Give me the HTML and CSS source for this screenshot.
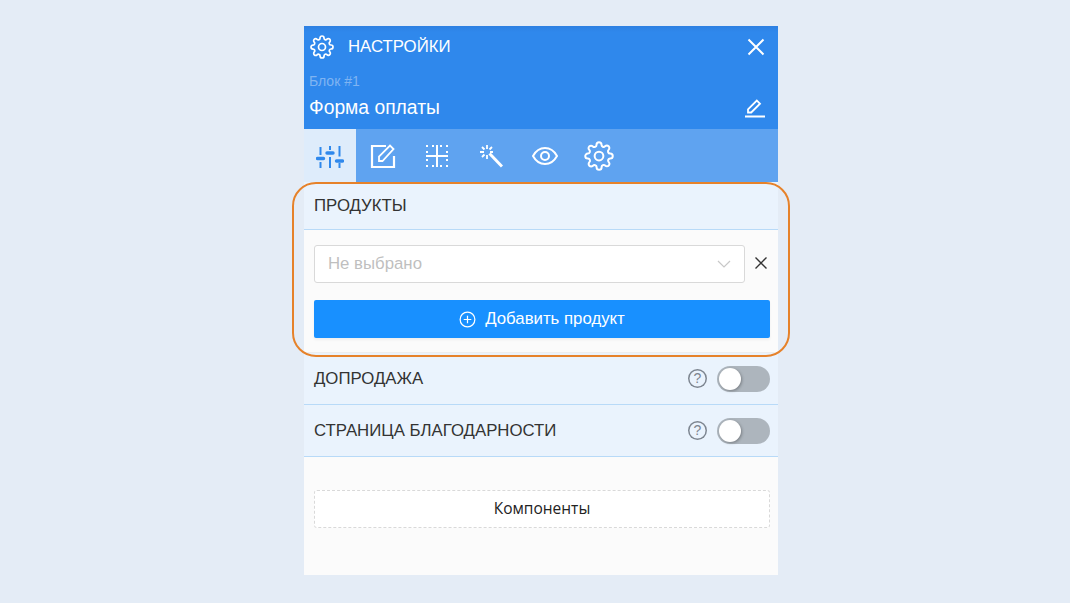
FILE: index.html
```html
<!DOCTYPE html>
<html lang="ru">

<head>
    <meta charset="UTF-8">
    <title>Настройки</title>
    <link rel="stylesheet" href="styles.css">
</head>

<body>
    <div class="panel">
        <header class="panel-head">
            <div class="head-top">
                <svg class="head-gear" viewBox="0 0 24 24"><circle cx="12" cy="12" r="3.500"/><path d="M19.400 15a1.650 1.650 0 0 0 .33 1.820l.06.06a2 2 0 0 1 0 2.830 2 2 0 0 1-2.830 0l-.06-.06a1.650 1.650 0 0 0-1.820-.33 1.650 1.650 0 0 0-1 1.510V21a2 2 0 0 1-2 2 2 2 0 0 1-2-2v-.09A1.650 1.650 0 0 0 9 19.400a1.650 1.650 0 0 0-1.820.33l-.06.06a2 2 0 0 1-2.830 0 2 2 0 0 1 0-2.830l.06-.06a1.650 1.650 0 0 0 .33-1.820 1.650 1.650 0 0 0-1.510-1H3a2 2 0 0 1-2-2 2 2 0 0 1 2-2h.09A1.650 1.650 0 0 0 4.600 9a1.650 1.650 0 0 0-.33-1.820l-.06-.06a2 2 0 0 1 0-2.830 2 2 0 0 1 2.830 0l.06.06a1.650 1.650 0 0 0 1.820.33H9a1.650 1.650 0 0 0 1-1.510V3a2 2 0 0 1 2-2 2 2 0 0 1 2 2v.09a1.650 1.650 0 0 0 1 1.510 1.650 1.650 0 0 0 1.820-.33l.06-.06a2 2 0 0 1 2.830 0 2 2 0 0 1 0 2.830l-.06.06a1.650 1.650 0 0 0-.33 1.820V9a1.650 1.650 0 0 0 1.510 1H21a2 2 0 0 1 2 2 2 2 0 0 1-2 2h-.09a1.650 1.650 0 0 0-1.510 1z"/></svg>
                <span class="head-title">НАСТРОЙКИ</span>
                <svg class="head-close" viewBox="0 0 18 18"><path d="M1.500 1.500l15 15M16.500 1.500l-15 15"/></svg>
            </div>
            <div class="head-block">Блок #1</div>
            <div class="head-name">
                <span>Форма оплаты</span>
                <svg class="head-edit" viewBox="0 0 20 20"><path d="M3 14.500v-3.200L11.800 2.500l3.200 3.200-8.800 8.800zM0 18.500h20"/></svg>
            </div>
        </header>

        <nav class="tabs">
            <a class="tab tab-active">
                <svg viewBox="0 0 28 24"><path d="M4.500 3v8M4.500 18v6M14 2v4M14 13v11M23.500 2v10.500M23.500 19v5" stroke-width="2"/><path d="M1.500 14.500h6M11 9h6M20.500 17h6" stroke-width="3.400" stroke-linecap="round"/></svg>
            </a>
            <a class="tab">
                <svg viewBox="0 0 26 26"><path d="M16 3H2v21h22V13" stroke-width="2.200"/><path d="M9 18v-4.500L20 2.500 23.500 6 12.500 18z" stroke-width="1.800"/></svg>
            </a>
            <a class="tab">
                <svg viewBox="0 0 22 22"><path d="M0 11h22M11 0v22" stroke-width="2"/><path d="M0 1h2M6 1h2M14 1h2M20 1h2M0 7h2M20 7h2M0 15h2M20 15h2M0 21h2M6 21h2M14 21h2M20 21h2" stroke-width="2"/></svg>
            </a>
            <a class="tab">
                <svg viewBox="0 0 24 24"><path d="M10.500 9.500L23 22.500" stroke-width="3"/><path d="M8 1v4M8 11v4M1 8h4M11 8h3M3 3l2.500 2.500M13 3l-2.500 2.500M3 13l2.500-2.500" stroke-width="1.800"/></svg>
            </a>
            <a class="tab">
                <svg viewBox="0 0 26 20"><path d="M1 10C4 4.500 8.500 2 13 2s9 2.500 12 8c-3 5.500-7.500 8-12 8S4 15.500 1 10z" stroke-width="2"/><circle cx="13" cy="10" r="4" stroke-width="2"/></svg>
            </a>
            <a class="tab">
                <svg viewBox="0 0 24 24" stroke-width="1.600"><circle cx="12" cy="12" r="3.500"/><path d="M19.400 15a1.650 1.650 0 0 0 .33 1.820l.06.06a2 2 0 0 1 0 2.830 2 2 0 0 1-2.830 0l-.06-.06a1.650 1.650 0 0 0-1.820-.33 1.650 1.650 0 0 0-1 1.510V21a2 2 0 0 1-2 2 2 2 0 0 1-2-2v-.09A1.650 1.650 0 0 0 9 19.400a1.650 1.650 0 0 0-1.820.33l-.06.06a2 2 0 0 1-2.830 0 2 2 0 0 1 0-2.830l.06-.06a1.650 1.650 0 0 0 .33-1.820 1.650 1.650 0 0 0-1.510-1H3a2 2 0 0 1-2-2 2 2 0 0 1 2-2h.09A1.650 1.650 0 0 0 4.600 9a1.650 1.650 0 0 0-.33-1.820l-.06-.06a2 2 0 0 1 0-2.830 2 2 0 0 1 2.830 0l.06.06a1.650 1.650 0 0 0 1.820.33H9a1.650 1.650 0 0 0 1-1.510V3a2 2 0 0 1 2-2 2 2 0 0 1 2 2v.09a1.650 1.650 0 0 0 1 1.510 1.650 1.650 0 0 0 1.820-.33l.06-.06a2 2 0 0 1 2.830 0 2 2 0 0 1 0 2.830l-.06.06a1.650 1.650 0 0 0-.33 1.820V9a1.650 1.650 0 0 0 1.510 1H21a2 2 0 0 1 2 2 2 2 0 0 1-2 2h-.09a1.650 1.650 0 0 0-1.510 1z"/></svg>
            </a>
        </nav>

        <section class="products">
            <div class="row-head row-products">ПРОДУКТЫ</div>
            <div class="products-body">
                <div class="select-line">
                    <div class="select-box">
                        <span>Не выбрано</span>
                        <svg class="select-arrow" viewBox="0 0 14 8"><path d="M1 1l6 6 6-6"/></svg>
                    </div>
                    <svg class="select-clear" viewBox="0 0 12 12"><path d="M.5.5l11 11M11.500.5l-11 11"/></svg>
                </div>
                <button class="add-btn">
                    <svg viewBox="0 0 18 18"><circle cx="9" cy="9" r="7.800"/><path d="M9 5v8M5 9h8"/></svg>
                    Добавить продукт
                </button>
            </div>
            <div class="highlight"></div>
        </section>

        <div class="row-head">
            <span>ДОПРОДАЖА</span>
            <div class="row-tools">
                <span class="help">?</span>
                <span class="toggle"><i></i></span>
            </div>
        </div>
        <div class="row-head">
            <span>СТРАНИЦА БЛАГОДАРНОСТИ</span>
            <div class="row-tools">
                <span class="help">?</span>
                <span class="toggle"><i></i></span>
            </div>
        </div>

        <div class="components">
            <div class="components-box">Компоненты</div>
        </div>
    </div>
</body>

</html>
```

FILE: styles.css
```css
html, body {
    margin: 0;
    padding: 0;
    height: 100%;
    overflow: hidden;
}

body {
    background: #e4ecf6;
    font-family: 'Liberation Sans', Arial, sans-serif;
    color: #333;
}

svg {
    fill: none;
    stroke: #fff;
    display: block;
}

.panel {
    width: 474px;
    height: 549px;
    margin: 26px 0 0 304px;
    background: #fbfbfb;
    display: flex;
    flex-direction: column;
}

.panel-head {
    height: 103px;
    box-sizing: border-box;
    background: linear-gradient(#2e80e2, #2f88ec 6px);
    color: #fff;
    padding: 7px 12px 0 5px;
}

.head-top {
    display: flex;
    align-items: center;
    height: 27px;
}

.head-gear {
    width: 24px;
    height: 24px;
    stroke-width: 1.700;
    margin-left: 1px;
}

.head-title {
    font-size: 16.800px;
    margin-left: 14px;
}

.head-close {
    width: 18px;
    height: 18px;
    stroke-width: 2;
    margin-left: auto;
    margin-right: 1px;
}

.head-block {
    font-size: 14px;
    line-height: 16px;
    margin-top: 13px;
    color: #7fb4f2;
}

.head-name {
    display: flex;
    justify-content: space-between;
    align-items: center;
    font-size: 19.300px;
    line-height: 22px;
    margin-top: 8px;
}

.head-edit {
    width: 20px;
    height: 20px;
    stroke-width: 1.800;
    margin-right: 1px;
}

.tabs {
    display: flex;
    height: 53px;
    background: #5fa3f0;
    flex: none;
}

.tab {
    width: 52px;
    display: flex;
    align-items: center;
    justify-content: center;
    flex: none;
}

.tab:nth-child(n+2) {
    width: 54px;
}

.tab:nth-child(2) svg { width: 26px; height: 26px; }
.tab:nth-child(3) svg { width: 22px; height: 22px; }
.tab:nth-child(4) svg { width: 24px; height: 24px; }
.tab:nth-child(5) svg { width: 26px; height: 20px; }
.tab:nth-child(6) svg { width: 30px; height: 30px; }

.tab-active {
    background: #deecfb;
}

.tab-active svg {
    width: 28px;
    height: 24px;
    stroke: #2f88ec;
}

.row-head {
    height: 52px;
    box-sizing: border-box;
    padding: 0 8px 0 10px;
    background: #eaf3fd;
    border-bottom: 1px solid #b8daf8;
    display: flex;
    align-items: center;
    justify-content: space-between;
    font-size: 16.800px;
    flex: none;
}

.row-products {
    height: 48px;
    padding-top: 1px;
}

.products {
    position: relative;
    flex: none;
}

.products-body {
    height: 123px;
    box-sizing: border-box;
    padding: 15px 8px 0 10px;
    background: #fbfbfb;
    box-shadow: inset 0 -1px 0 #eee;
}

.select-line {
    display: flex;
    align-items: center;
}

.select-box {
    flex: 1;
    height: 38px;
    box-sizing: border-box;
    background: #fff;
    border: 1px solid #d9d9d9;
    border-radius: 3px;
    padding: 0 13px 0 13px;
    display: flex;
    align-items: center;
    justify-content: space-between;
    font-size: 16.800px;
    color: #bfbfbf;
}

.select-arrow {
    width: 14px;
    height: 8px;
    stroke: #c8c8c8;
    stroke-width: 1.200;
}

.select-clear {
    width: 12px;
    height: 12px;
    stroke: #333;
    stroke-width: 1.400;
    margin: -2px 3px 0 10px;
}

.add-btn {
    width: 100%;
    height: 38px;
    margin-top: 17px;
    border: none;
    border-radius: 2px;
    background: #1890ff;
    color: #fff;
    font-family: inherit;
    font-size: 16.800px;
    display: flex;
    align-items: center;
    justify-content: center;
    gap: 9px;
    box-shadow: 0 2px 3px rgba(0, 0, 0, 0.05);
}

.add-btn svg {
    width: 17px;
    height: 17px;
    stroke-width: 1.300;
}

.highlight {
    position: absolute;
    left: -12px;
    right: -12px;
    top: 0;
    bottom: -4px;
    border: 2px solid #e6822a;
    border-radius: 24px;
    pointer-events: none;
}

.row-tools {
    display: flex;
    align-items: center;
    gap: 10px;
}

.help {
    width: 19px;
    height: 19px;
    box-shadow: inset 0 0 0 1.500px #7d8590;
    border-radius: 50%;
    color: #7d8590;
    font-size: 14px;
    line-height: 19px;
    text-align: center;
}

.toggle {
    width: 53px;
    height: 26px;
    border-radius: 13px;
    background: #adb5bd;
    position: relative;
}

.toggle i {
    position: absolute;
    left: 2px;
    top: 2px;
    width: 22px;
    height: 22px;
    border-radius: 50%;
    background: #fff;
    box-shadow: 1px 1px 3px rgba(0, 0, 0, 0.3);
}

.components {
    padding: 33px 8px 0 10px;
}

.components-box {
    height: 38px;
    box-sizing: border-box;
    padding-bottom: 2px;
    background: #fff;
    border: 1px dashed #d9d9d9;
    border-radius: 3px;
    display: flex;
    align-items: center;
    justify-content: center;
    font-family: 'Open Sans', sans-serif;
    font-size: 15.500px;
    color: #222;
}
```
